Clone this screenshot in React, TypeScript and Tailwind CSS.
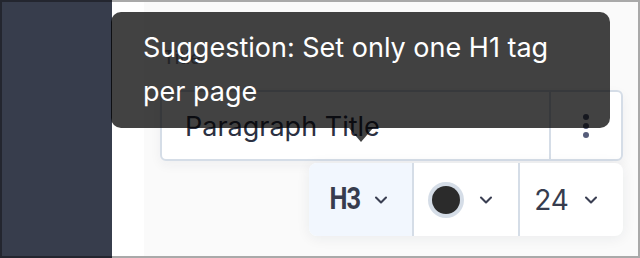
import React from 'react';
import { ChevronDown } from 'lucide-react';

const Chevron: React.FC = () => (
  <ChevronDown size={20} strokeWidth={2.5} className="text-[#3a3f52]" />
);

const Toolbar: React.FC = () => (
  <div className="self-end mt-[2px] flex h-[73px] w-[314px] rounded-lg bg-white shadow-[0_2px_14px_rgba(30,40,60,0.07)]">
    <button className="flex w-[103px] items-center justify-center gap-2 rounded-l-lg bg-[#f2f7fe] pr-1">
      <span className="inline-block origin-center scale-x-[0.82] font-['Roboto'] text-[31px] font-bold tracking-[-1px] text-[#373c4e]">H3</span>
      <Chevron />
    </button>
    <div className="w-[2px] bg-[#d5dde7]" />
    <button className="flex flex-1 items-center justify-center gap-3 pr-2">
      <span className="flex h-9 w-9 items-center justify-center rounded-full bg-[#d5dde7]">
        <span className="h-7 w-7 rounded-full bg-[#2b2b2b]" />
      </span>
      <Chevron />
    </button>
    <div className="w-[2px] bg-[#d5dde7]" />
    <button className="flex w-[103px] items-center justify-center gap-3 pr-2">
      <span className="text-[28px] text-[#373c4e]">24</span>
      <Chevron />
    </button>
  </div>
);

const App: React.FC = () => {
  return (
    <div className="relative flex h-[258px] w-[640px] overflow-hidden font-['Inter',sans-serif]">
      <aside className="w-[112px] border-y-2 border-l-2 border-[#23262f] bg-[#373d4c]" />

      <main className="flex flex-1 border-y-2 border-r-2 border-[#a9a9a9] bg-white">
        <div className="w-[32px]" />
        <section className="flex flex-1 flex-col bg-[#fafafa] pl-4 pr-[15px] pt-[46px]">
          <label className="mb-[22px] h-5 pl-[3px] text-[18px] leading-5 font-medium text-[#8a90a0]">Title</label>
          <div className="flex h-[71px] w-full rounded-md border-2 border-[#d5dde7] bg-white shadow-[0_4px_12px_rgba(30,40,60,0.05)]">
            <div className="flex flex-1 items-center pl-[23px] pt-1 text-[27px] text-[#2c3142]">
              Paragraph Title
            </div>
            <div className="flex w-[72px] flex-col items-center justify-center gap-[3px] border-l-2 border-[#d5dde7]">
              <span className="h-[6px] w-[6px] rounded-full bg-[#565d7a]" />
              <span className="h-[6px] w-[6px] rounded-full bg-[#565d7a]" />
              <span className="h-[6px] w-[6px] rounded-full bg-[#565d7a]" />
            </div>
          </div>
          <Toolbar />
        </section>
      </main>

      <div className="absolute left-[111px] top-[12px] w-[499px] rounded-[10px] bg-black/[0.74] px-8 py-[14px] text-[27px] leading-[44px] text-white">
        Suggestion: Set only one H1 tag per page
        <span className="absolute left-1/2 top-full -translate-x-1/2 border-x-[12px] border-t-[14px] border-x-transparent border-t-black/[0.74]" />
      </div>
    </div>
  );
};

export default App;
